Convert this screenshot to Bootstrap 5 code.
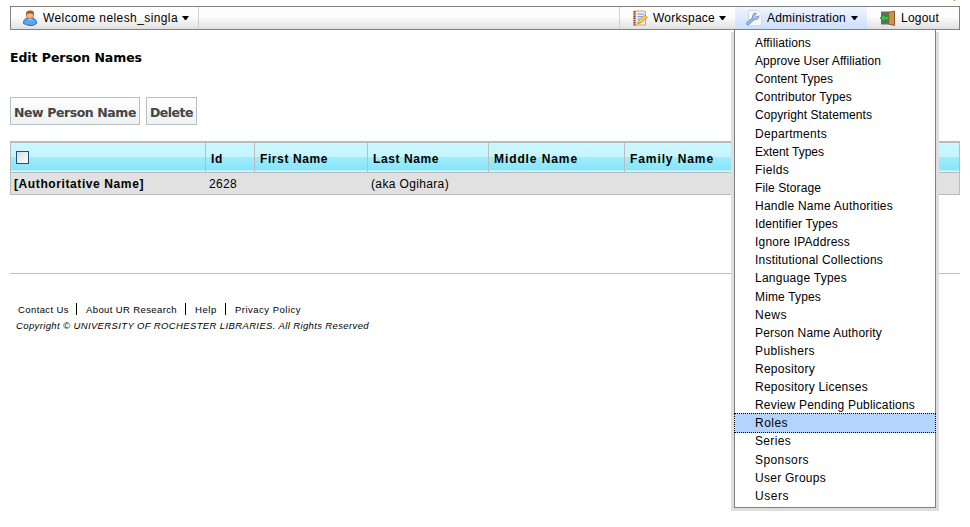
<!DOCTYPE html>
<html lang="en">
<head>
<meta charset="utf-8">
<meta name="viewport" content="width=device-width, initial-scale=1">
<title>Edit Person Names</title>
<link href="https://cdn.jsdelivr.net/npm/bootstrap@5.3.0/dist/css/bootstrap.min.css" rel="stylesheet">
<style>
body{font-family:"Liberation Sans",Arial,sans-serif;font-size:12px;line-height:18px;color:#000;background:#fff;overflow:hidden;height:527px}
.page{width:950px;margin-left:10px}
.menubar{margin-top:6px;height:24px;border:1px solid #808080;background:linear-gradient(#fff 0,#fcfcfc 45%,#e0e0e0 100%);padding:0}
.menubar .nav-link{height:22px;padding:0;color:#000;border:0 solid #d0d0d0;white-space:nowrap}
.menubar svg{flex:none}
.nav-link .t{margin-left:5px}
.caret{width:7px;height:4px;background:#000;clip-path:polygon(0 0,100% 0,58% 100%,42% 100%);margin-left:4px}
.t{display:inline-block;white-space:nowrap}
.m-user{width:188px;border-right-width:1px!important;padding-left:11px!important}
.m-work{width:116px;border-left-width:1px!important;padding-left:12px!important}
.m-admin{width:132px;padding-left:11px!important;background:linear-gradient(#f0f6ff,#e0ecff 40%,#cddffc)}
.m-admin .caret{margin-left:5px}
.m-out{width:92px;padding-left:12px!important}
.admin-menu{display:block;width:202px;left:-1px;top:22px;height:479px;margin:0;padding:4px 0 0;border:1px solid #808080;border-radius:0;box-shadow:3px 3px 0 #dedede,-3px 3px 0 #dedede;font-size:12px}
.admin-menu .dropdown-item{height:18.12px;line-height:18px;padding:0 0 0 20px;color:#000}
.admin-menu .dropdown-item.active{background:#b3d4ff;height:20px;margin:-1px -1px -.88px;padding-left:20px;border:1px dotted #000;line-height:18px}
h1{font:bold 12.5px/18px "DejaVu Sans",Verdana,sans-serif;margin:19px 0 30px}
.btn-old{font:bold 12.5px/16px "DejaVu Sans",Verdana,sans-serif;color:#444;border:1px solid #b5bfc3;border-radius:0;background:linear-gradient(#fff,#edf2f3);height:28px;padding:3px 0 0 3px;text-align:left;white-space:nowrap}
.b1{width:130px}.b2{width:51px}
.btn-row{gap:6px}
.names{table-layout:fixed;margin:16px 0 0;border:1px solid #b5bdc0;border-collapse:separate;border-spacing:0;height:54px}
.names th{height:31px;padding:3px 0 0 5px;border-right:1px solid #bcbcc4;border-bottom:1px solid #b5bdc0;border-top:1px solid #b5bdc0;background:linear-gradient(#cbf7ff 0,#c5f5ff 47%,#a1ecfc 48%,#87e6fa 92%,#d5f7ff 97%);font-size:12px;line-height:18px;color:#000;vertical-align:middle}
.names td{height:21px;padding:1px 0 0 3px;background:#e1e1e1;border:0;color:#000;vertical-align:middle}
.names th:last-child{border-right:0}
.names .form-check-input{display:block;width:13px;height:13px;margin:-3px 0 0;border:1px solid #1c5180;border-radius:0;background:linear-gradient(135deg,#dcdcd7,#fff)}
.c1{width:195px}.c2{width:49px}.c3{width:113px}.c4{width:121px}.c5{width:136px}
.foot{margin-top:78px;border-top:1px solid #bfbfbf;padding-top:28px;font-size:9.5px;line-height:16px}
.links{padding-left:8px;height:16px}
.sep{width:1px;height:12px;background:#000;margin:-2px 9px 0 8px}
.links .sep:nth-of-type(1){margin-left:7px}
.copy{padding-left:6px;font-style:italic}
.dot{left:943px;top:-6px;width:3px;height:1px;background:#ffc44a}
</style>
</head>
<body>
<div class="page position-relative">
<nav class="menubar d-flex justify-content-between">
  <a class="nav-link d-flex align-items-center m-user" href="#">
    <svg width="16" height="16" viewBox="0 0 16 16"><path d="M1.500 13.500c0-4 2-5.500 6.500-5.500s6.500 1.500 6.500 5.500q-3 2.500-6.500 2T1.500 13.500z" fill="#5ba5f4" stroke="#2e69bd"/><path d="M5.500 8.500Q8 11 10.500 8.500" fill="#fff"/><circle cx="8" cy="5" r="3.700" fill="#f1b880" stroke="#a66b2c" stroke-width=".8"/><path d="M4 5Q3.500.8 8 .6T12 5L10 3.500H6z" fill="#9a5a20"/></svg>
    <span class="t" data-w="135">Welcome nelesh_singla</span><span class="caret"></span></a>
  <div class="d-flex">
    <a class="nav-link d-flex align-items-center m-work" href="#">
      <svg width="16" height="16" viewBox="0 0 16 16"><path d="M2.500 1h11v14h-11z" fill="#e6effb" stroke="#e0a35c"/><path d="M2.500 1v14.500" stroke="#a4522b" stroke-width="2.500" stroke-dasharray="1.500 .7"/><path d="M5.500 4h6.500M5.500 6.500h5M5.500 9h3" stroke="#6fa0dc" stroke-width="1.200"/><path d="M5.500 14l1.500-4 6-5 2.300 2.500-6 5z" fill="#ffc850" stroke="#cf852c" stroke-width=".8"/></svg>
      <span class="t" data-w="62">Workspace</span><span class="caret"></span></a>
    <div class="position-relative">
      <a class="nav-link d-flex align-items-center m-admin" href="#">
        <svg width="16" height="16" viewBox="0 0 16 16"><path d="M2.500.5h9l4 3.500v11.500h-13z" fill="#fafafa" stroke="#d5d9de"/><path d="M2 13.500L8 8" stroke="#688fc4" stroke-width="3.500" stroke-linecap="round"/><path d="M2 13.500L8 8" stroke="#9fc0ea" stroke-width="1.700" stroke-linecap="round"/><path d="M10.500 3Q7 2.500 6.500 6T10 9.700q3-.5 3-4L10.800 7 9 5.200z" fill="#a9c5e8" stroke="#688fc4" stroke-width=".8"/></svg>
        <span class="t" data-w="79">Administration</span><span class="caret"></span></a>
      <div class="dropdown-menu position-absolute admin-menu">
        <a class="dropdown-item" href="#"><span class="t" data-w="56">Affiliations</span></a>
        <a class="dropdown-item" href="#"><span class="t" data-w="126">Approve User Affiliation</span></a>
        <a class="dropdown-item" href="#"><span class="t" data-w="78">Content Types</span></a>
        <a class="dropdown-item" href="#"><span class="t" data-w="97">Contributor Types</span></a>
        <a class="dropdown-item" href="#"><span class="t" data-w="117">Copyright Statements</span></a>
        <a class="dropdown-item" href="#"><span class="t" data-w="72">Departments</span></a>
        <a class="dropdown-item" href="#"><span class="t" data-w="69">Extent Types</span></a>
        <a class="dropdown-item" href="#"><span class="t" data-w="34">Fields</span></a>
        <a class="dropdown-item" href="#"><span class="t" data-w="66">File Storage</span></a>
        <a class="dropdown-item" href="#"><span class="t" data-w="138">Handle Name Authorities</span></a>
        <a class="dropdown-item" href="#"><span class="t" data-w="83">Identifier Types</span></a>
        <a class="dropdown-item" href="#"><span class="t" data-w="95">Ignore IPAddress</span></a>
        <a class="dropdown-item" href="#"><span class="t" data-w="128">Institutional Collections</span></a>
        <a class="dropdown-item" href="#"><span class="t" data-w="92">Language Types</span></a>
        <a class="dropdown-item" href="#"><span class="t" data-w="66">Mime Types</span></a>
        <a class="dropdown-item" href="#"><span class="t" data-w="32">News</span></a>
        <a class="dropdown-item" href="#"><span class="t" data-w="127">Person Name Authority</span></a>
        <a class="dropdown-item" href="#"><span class="t" data-w="60">Publishers</span></a>
        <a class="dropdown-item" href="#"><span class="t" data-w="60">Repository</span></a>
        <a class="dropdown-item" href="#"><span class="t" data-w="113">Repository Licenses</span></a>
        <a class="dropdown-item" href="#"><span class="t" data-w="160">Review Pending Publications</span></a>
        <a class="dropdown-item active w-auto" href="#"><span class="t" data-w="33">Roles</span></a>
        <a class="dropdown-item" href="#"><span class="t" data-w="36">Series</span></a>
        <a class="dropdown-item" href="#"><span class="t" data-w="54">Sponsors</span></a>
        <a class="dropdown-item" href="#"><span class="t" data-w="71">User Groups</span></a>
        <a class="dropdown-item" href="#"><span class="t" data-w="34">Users</span></a>
      </div>
    </div>
    <a class="nav-link d-flex align-items-center m-out" href="#">
      <svg width="17" height="16" viewBox="0 0 17 16"><path d="M2 1.500h9v13H2z" fill="#5d7560"/><path d="M9.500 2.500l6-1.500v14.500l-6-1.500z" fill="#cf9150" stroke="#8c5a2e"/><path d="M1 8l5-4v2.300h4v3.700H6v2.300z" fill="#4bb83e" stroke="#26782a" stroke-width=".7"/></svg>
      <span class="t" data-w="38">Logout</span></a>
  </div>
</nav>
<h1><span class="t" data-w="132">Edit Person Names</span></h1>
<div class="d-flex btn-row">
  <button class="btn btn-old b1"><span class="t" data-w="122">New Person Name</span></button>
  <button class="btn btn-old b2"><span class="t" data-w="43">Delete</span></button>
</div>
<table class="table names">
  <colgroup><col class="c1"><col class="c2"><col class="c3"><col class="c4"><col class="c5"><col></colgroup>
  <thead><tr><th><input class="form-check-input" type="checkbox" aria-label="Select all"></th><th><span class="t" data-w="12">Id</span></th><th><span class="t" data-w="68">First Name</span></th><th><span class="t" data-w="66">Last Name</span></th><th><span class="t" data-w="84">Middle Name</span></th><th><span class="t" data-w="84">Family Name</span></th></tr></thead>
  <tbody><tr><td><b class="t" data-w="130">[Authoritative Name]</b></td><td><span class="t" data-w="28">2628</span></td><td></td><td><span class="t" data-w="78">(aka Ogihara)</span></td><td></td><td></td></tr></tbody>
</table>
<footer class="foot">
  <div class="links d-flex align-items-center">
    <span class="t" data-w="51">Contact Us</span><i class="sep"></i>
    <span class="t" data-w="91">About UR Research</span><i class="sep"></i>
    <span class="t" data-w="22">Help</span><i class="sep"></i>
    <span class="t" data-w="66">Privacy Policy</span>
  </div>
  <div class="copy"><span class="t" data-w="353">Copyright © UNIVERSITY OF ROCHESTER LIBRARIES. All Rights Reserved</span></div>
</footer>
<i class="dot position-absolute"></i>
</div>
<script src="https://cdn.jsdelivr.net/npm/bootstrap@5.3.0/dist/js/bootstrap.bundle.min.js"></script>
<script>
// Track each label's letters so its text fills its nominal width.
document.querySelectorAll('.t[data-w]').forEach(function(e){
  var w=+e.dataset.w,n=e.textContent.length;
  var s=(w-e.getBoundingClientRect().width)/n;
  e.style.letterSpacing=s+'px';
});
</script>
</body>
</html>
